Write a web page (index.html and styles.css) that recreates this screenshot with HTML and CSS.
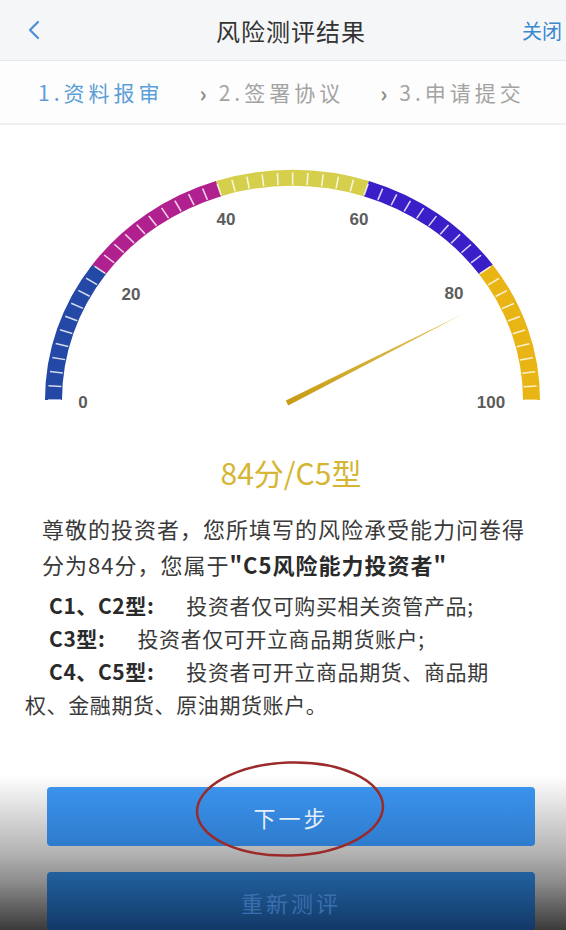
FILE: index.html
```html
<!DOCTYPE html>
<html lang="zh-CN">
<head>
    <meta charset="UTF-8">
    <title>风险测评结果</title>
    <link rel="stylesheet" href="styles.css">
</head>
<body>
<div class="page">
    <header class="nav">
        <span class="back">
            <svg width="14" height="20" viewBox="0 0 14 20"><polyline points="11,2 3,10 11,18" fill="none" stroke="#4a8fd8" stroke-width="2.2" stroke-linecap="round" stroke-linejoin="round"/></svg>
        </span>
        <h1 class="title">风险测评结果</h1>
        <span class="close">关闭</span>
    </header>

    <nav class="steps">
        <span class="step active">1.资料报审</span>
        <span class="arrow">›</span>
        <span class="step">2.签署协议</span>
        <span class="arrow">›</span>
        <span class="step">3.申请提交</span>
    </nav>

    <section class="gauge">
        <svg width="582" height="300" viewBox="0 128 582 300">
            <defs>
                <linearGradient id="needle" x1="0" y1="1" x2="1" y2="0">
                    <stop offset="0" stop-color="#c89a14"/>
                    <stop offset="1" stop-color="#e2c65a"/>
                </linearGradient>
            </defs>
            <g transform="translate(292.5 403) scale(1 0.93)" fill="none" stroke-width="17">
                <path d="M -239 0 A 239 239 0 0 1 -193.36 -140.48" stroke="#2448a6"/>
                <path d="M -193.36 -140.48 A 239 239 0 0 1 -73.86 -227.30" stroke="#b0208e"/>
                <path d="M -73.86 -227.30 A 239 239 0 0 1 73.86 -227.30" stroke="#d5cf4c"/>
                <path d="M 73.86 -227.30 A 239 239 0 0 1 193.36 -140.48" stroke="#3a1fc8"/>
                <path d="M 193.36 -140.48 A 239 239 0 0 1 239 0" stroke="#e9b514"/>
                <!-- white split ticks, 50 parts -->
                <path d="M -238 0 A 238 238 0 0 1 238 0" stroke="#fff" stroke-opacity="0.8" stroke-width="13" stroke-dasharray="1.6 13.354" stroke-dashoffset="0.8"/>
            </g>
            <g class="labels">
                <text x="83" y="405">0</text>
                <text x="131" y="297">20</text>
                <text x="226" y="222">40</text>
                <text x="359" y="222">60</text>
                <text x="454" y="296">80</text>
                <text x="491" y="405">100</text>
            </g>
            <polygon points="288.2,408.4 285.8,403.6 463,317" fill="url(#needle)"/>
        </svg>
    </section>

    <div class="score">84分/C5型</div>

    <p class="intro">尊敬的投资者，您所填写的风险承受能力问卷得分为84分，您属于<b>"C5风险能力投资者"</b></p>

    <div class="types">
        <p><b>C1、C2型:</b>投资者仅可购买相关资管产品;</p>
        <p><b>C3型:</b>投资者仅可开立商品期货账户;</p>
        <p><b>C4、C5型:</b>投资者可开立商品期货、商品期权、金融期货、原油期货账户。</p>
    </div>

    <div class="actions">
        <button class="btn primary">下一步</button>
        <button class="btn secondary">重新测评</button>
    </div>

    <svg class="mark" width="200" height="104" viewBox="0 0 200 104">
        <ellipse cx="100" cy="52" rx="93" ry="46.5" fill="none" stroke="#9b2a2a" stroke-width="2.5" transform="rotate(-2 100 52)"/>
    </svg>
</div>
</body>
</html>
```

FILE: styles.css
```css
html, body {
    margin: 0;
    padding: 0;
    overflow: hidden;
}
body {
    font-family: "Noto Sans CJK SC", "Noto Sans", sans-serif;
    color: #333;
    background: #3a3a3a;
}
.page {
    position: relative;
    width: 582px;
    height: 930px;
    overflow: hidden;
    background: linear-gradient(to bottom, #fff 0, #fff 775px, #e2e2e2 805px, #b4b4b4 852px, #8c8c8c 882px, #3a3a3a 930px);
}
.nav {
    display: grid;
    grid-template-columns: 1fr auto 1fr;
    align-items: center;
    height: 60px;
    background: #f5f6f8;
    border-bottom: 1px solid #e6e7ea;
}
.back {
    padding-left: 27px;
    display: flex;
    align-items: center;
}
.title {
    margin: 0;
    font-size: 24px;
    font-weight: 400;
    color: #333;
    letter-spacing: 1px;
}
.close {
    justify-self: end;
    padding-right: 20px;
    font-size: 20px;
    color: #3b88cf;
}
.steps {
    display: flex;
    align-items: center;
    height: 62px;
    padding-left: 38px;
    background: #fdfdfd;
    border-bottom: 2px solid #f0f0f2;
}
.step {
    font-size: 21px;
    letter-spacing: 4px;
    color: #a3a3a3;
}
.step.active {
    color: #5c9ed8;
}
.arrow {
    margin: 0 12px 0 36px;
    font-size: 22px;
    font-weight: 700;
    color: #8a8a8a;
}
.gauge svg {
    display: block;
}
.labels text {
    font-family: "Liberation Sans", Arial, sans-serif;
    font-size: 17px;
    font-weight: 700;
    fill: #5c5c5c;
    text-anchor: middle;
    dominant-baseline: central;
}
.score {
    margin-top: 26px;
    text-align: center;
    font-size: 30px;
    line-height: 42px;
    color: #d5b533;
}
.intro {
    width: 495px;
    margin: 17px 0 0 42px;
    font-size: 22px;
    letter-spacing: 1px;
    line-height: 36px;
    color: #3a3a3a;
}
.intro b {
    color: #2a2a2a;
}
.types {
    width: 500px;
    margin: 7px 0 0 25px;
}
.types p {
    margin: 0;
    text-indent: 24px;
    font-size: 21px;
    letter-spacing: 0.6px;
    line-height: 33px;
    color: #3a3a3a;
}
.types b {
    margin-right: 32px;
    color: #2a2a2a;
}
.actions {
    display: flex;
    flex-direction: column;
    gap: 26px;
    margin: 66px 0 0 47px;
    width: 488px;
}
.btn {
    height: 59px;
    border: 0;
    border-radius: 4px;
    font-family: inherit;
    font-size: 22px;
    letter-spacing: 3px;
}
.primary {
    background: linear-gradient(to bottom, #3b93ec, #2e7bcd);
    color: #e6eef8;
}
.secondary {
    background: linear-gradient(to bottom, #22619f, #123866);
    color: #3a6fae;
}
.mark {
    position: absolute;
    left: 190px;
    top: 757px;
}
```
